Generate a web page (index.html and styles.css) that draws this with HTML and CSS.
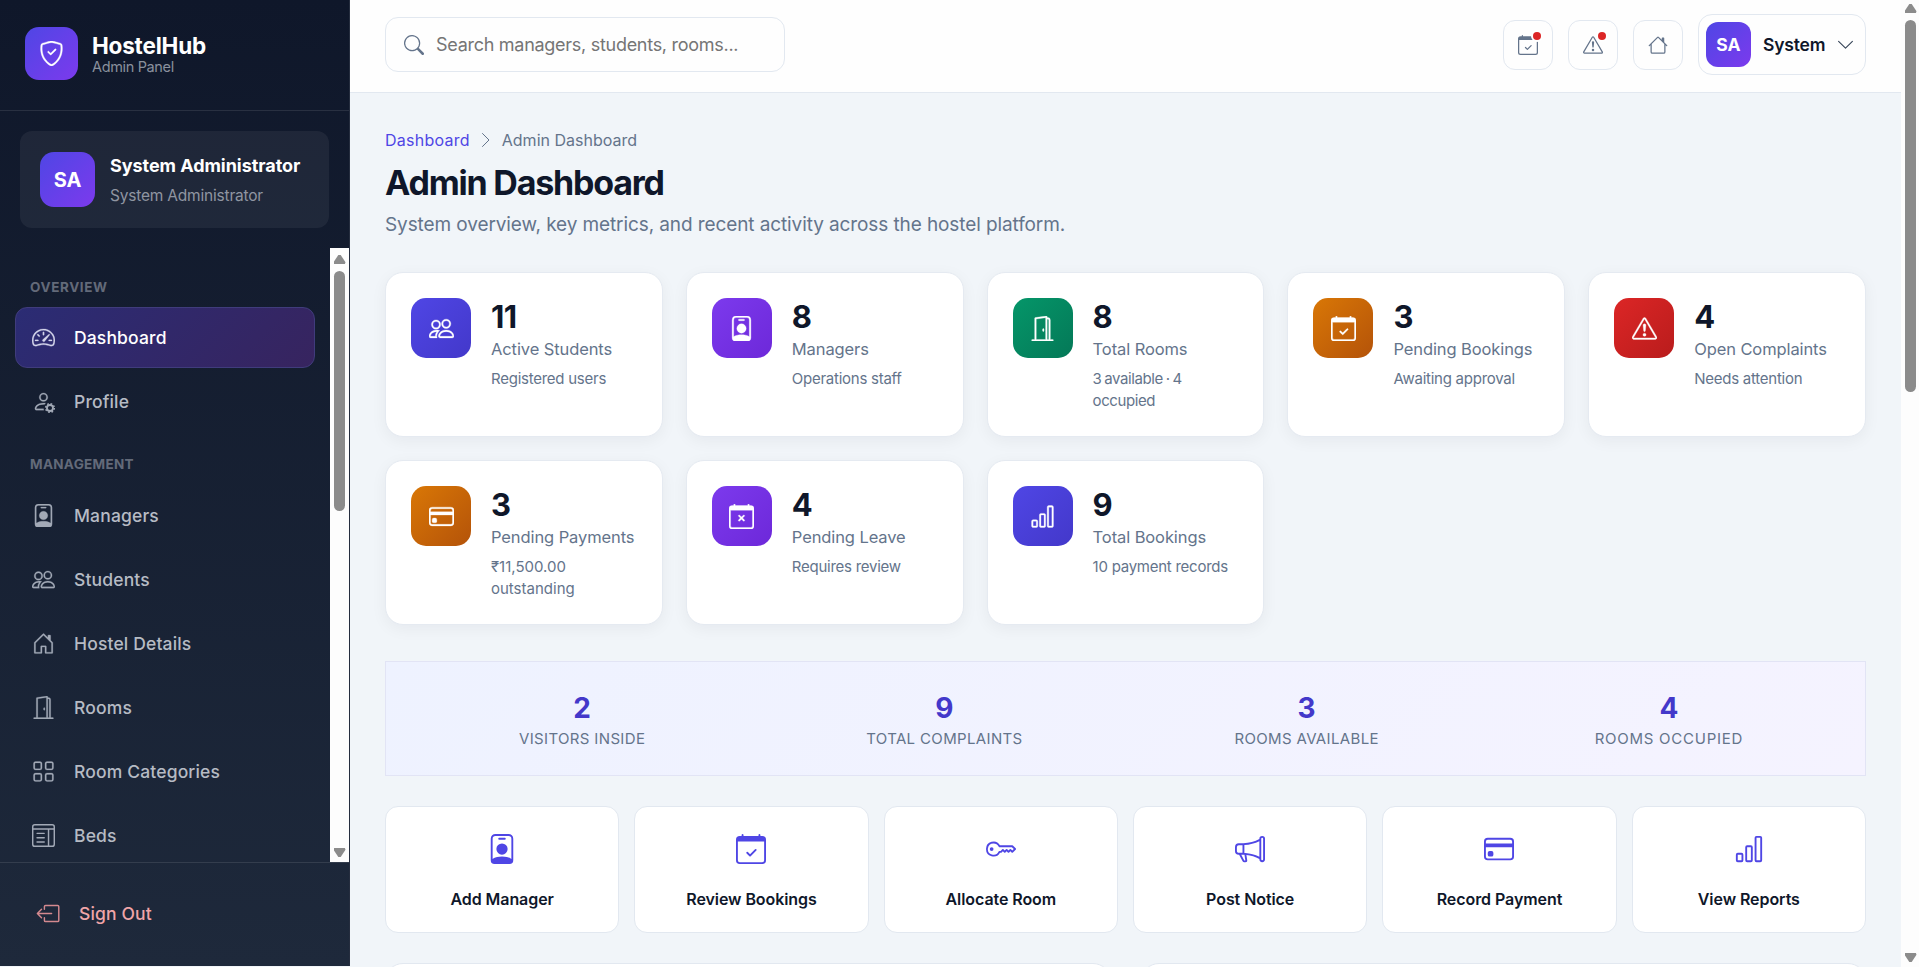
FILE: index.html
```html
<!DOCTYPE html>
<html lang="en">
<head>
<meta charset="utf-8">
<title>HostelHub Admin Dashboard</title>
<link rel="stylesheet" href="styles.css">
</head>
<body>
<svg class="sprite" xmlns="http://www.w3.org/2000/svg">
  <symbol id="i-shield" viewBox="0 0 16 16"><path d="M5.338 1.59a61 61 0 0 0-2.837.856.48.48 0 0 0-.328.39c-.554 4.157.726 7.19 2.253 9.188a10.7 10.7 0 0 0 2.287 2.233c.346.244.652.42.893.533q.18.085.293.118a1 1 0 0 0 .101.025 1 1 0 0 0 .1-.025q.114-.034.294-.118c.24-.113.547-.29.893-.533a10.7 10.7 0 0 0 2.287-2.233c1.527-1.997 2.807-5.031 2.253-9.188a.48.48 0 0 0-.328-.39c-.651-.213-1.75-.56-2.837-.855C9.552 1.29 8.531 1.067 8 1.067c-.53 0-1.552.223-2.662.524zM5.072.56C6.157.265 7.31 0 8 0s1.843.265 2.928.56c1.11.3 2.229.655 2.887.87a1.54 1.54 0 0 1 1.044 1.262c.596 4.477-.787 7.795-2.465 9.99a11.8 11.8 0 0 1-2.517 2.453 7 7 0 0 1-1.048.625c-.28.132-.581.24-.829.24s-.548-.108-.829-.24a7 7 0 0 1-1.048-.625 11.8 11.8 0 0 1-2.517-2.453C1.928 10.487.545 7.169 1.141 2.692A1.54 1.54 0 0 1 2.185 1.43 63 63 0 0 1 5.072.56"/><path d="M10.854 5.146a.5.5 0 0 1 0 .708l-3 3a.5.5 0 0 1-.708 0l-1.5-1.5a.5.5 0 1 1 .708-.708L7.5 7.793l2.646-2.647a.5.5 0 0 1 .708 0"/></symbol>
  <symbol id="i-speed" viewBox="0 0 16 16"><path d="M8 4a.5.5 0 0 1 .5.5V6a.5.5 0 0 1-1 0V4.500A.5.5 0 0 1 8 4M3.732 5.732a.5.5 0 0 1 .707 0l.915.914a.5.5 0 1 1-.708.708l-.914-.915a.5.5 0 0 1 0-.707M2 10a.5.5 0 0 1 .5-.5h1.586a.5.5 0 0 1 0 1H2.500A.5.5 0 0 1 2 10m9.500 0a.5.5 0 0 1 .5-.5h1.500a.5.5 0 0 1 0 1H12a.5.5 0 0 1-.5-.5m.754-4.246a.39.39 0 0 0-.527-.02L7.547 9.310a.91.91 0 1 0 1.302 1.258l3.434-4.297a.39.39 0 0 0-.029-.518z"/><path fill-rule="evenodd" d="M0 10a8 8 0 1 1 15.547 2.661c-.442 1.253-1.845 1.602-2.932 1.250C11.309 13.488 9.475 13 8 13c-1.474 0-3.310.488-4.615.911-1.087.352-2.490.003-2.932-1.250A8 8 0 0 1 0 10m8-7a7 7 0 0 0-6.603 9.329c.203.575.923.876 1.680.630C4.397 12.533 6.358 12 8 12s3.604.532 4.923.960c.757.245 1.477-.056 1.680-.631A7 7 0 0 0 8 3"/></symbol>
  <symbol id="i-persongear" viewBox="0 0 16 16"><path d="M11 5a3 3 0 1 1-6 0 3 3 0 0 1 6 0M8 7a2 2 0 1 0 0-4 2 2 0 0 0 0 4m.256 7a4.500 4.500 0 0 1-.229-1.004H3c.001-.246.154-.986.832-1.664C4.484 10.680 5.711 10 8 10q.390 0 .740.025c.226-.341.496-.650.804-.918Q8.844 9.002 8 9c-5 0-6 3-6 4s1 1 1 1z"/><g fill="none" stroke="currentColor"><circle cx="12.500" cy="12.500" r="2.100" stroke-width="1.300"/><circle cx="12.500" cy="12.500" r="3" stroke-width="1.100" stroke-dasharray="1.180 1.176"/></g></symbol>
  <symbol id="i-badge" viewBox="0 0 16 16"><path d="M6.500 2a.5.5 0 0 0 0 1h3a.5.5 0 0 0 0-1zM11 8a3 3 0 1 1-6 0 3 3 0 0 1 6 0"/><path d="M4.500 0A2.500 2.500 0 0 0 2 2.500V14a2 2 0 0 0 2 2h8a2 2 0 0 0 2-2V2.500A2.500 2.500 0 0 0 11.500 0zM3 2.500A1.500 1.500 0 0 1 4.500 1h7A1.500 1.500 0 0 1 13 2.500v10.795a4.200 4.200 0 0 0-.776-.492C11.392 12.387 10.063 12 8 12s-3.392.387-4.224.803a4.200 4.200 0 0 0-.776.492z"/></symbol>
  <symbol id="i-people" viewBox="0 0 16 16"><path d="M15 14s1 0 1-1-1-4-5-4-5 3-5 4 1 1 1 1zm-7.978-1L7 12.996c.001-.264.167-1.030.760-1.720C8.312 10.629 9.282 10 11 10c1.717 0 2.687.630 3.240 1.276.593.690.758 1.457.760 1.720l-.008.002-.014.002zM11 7a2 2 0 1 0 0-4 2 2 0 0 0 0 4m3-2a3 3 0 1 1-6 0 3 3 0 0 1 6 0M6.936 9.280a6 6 0 0 0-1.230-.247A7 7 0 0 0 5 9c-4 0-5 3-5 4q0 1 1 1h4.216A2.240 2.240 0 0 1 5 13c0-1.010.377-2.042 1.090-2.904.243-.294.526-.569.846-.816M4.920 10A5.500 5.500 0 0 0 4 13H1c0-.260.164-1.030.760-1.724.545-.636 1.492-1.256 3.160-1.275ZM1.500 5.500a3 3 0 1 1 6 0 3 3 0 0 1-6 0m3-2a2 2 0 1 0 0 4 2 2 0 0 0 0-4"/></symbol>
  <symbol id="i-housedoor" viewBox="0 0 16 16"><path d="M8.354 1.146a.5.5 0 0 0-.708 0l-6 6A.5.5 0 0 0 1.500 7.500v7a.5.5 0 0 0 .5.5h4.500a.5.5 0 0 0 .5-.5v-4h2v4a.5.5 0 0 0 .5.5H14a.5.5 0 0 0 .5-.5v-7a.5.5 0 0 0-.146-.354L13 5.793V2.500a.5.5 0 0 0-.5-.5h-1a.5.5 0 0 0-.5.500v1.293zM2.500 14V7.707l5.500-5.500 5.500 5.500V14H10v-4a.5.5 0 0 0-.5-.5h-3a.5.5 0 0 0-.5.5v4z"/></symbol>
  <symbol id="i-house" viewBox="0 0 16 16"><path d="M8.707 1.500a1 1 0 0 0-1.414 0L.646 8.146a.5.5 0 0 0 .708.708L2 8.207V13.500A1.500 1.500 0 0 0 3.500 15h9a1.500 1.500 0 0 0 1.500-1.500V8.207l.646.647a.5.5 0 0 0 .708-.708L13 5.793V2.500a.5.5 0 0 0-.5-.5h-1a.5.5 0 0 0-.5.500v1.293zM13 7.207V13.500a.5.5 0 0 1-.5.500h-9a.5.5 0 0 1-.5-.5V7.207l5-5z"/></symbol>
  <symbol id="i-door" viewBox="0 0 16 16"><path d="M8.500 10c-.276 0-.5-.448-.5-1s.224-1 .5-1 .5.448.5 1-.224 1-.5 1"/><path d="M10.828.122A.5.5 0 0 1 11 .5V1h.5A1.500 1.500 0 0 1 13 2.500V15h1.500a.5.5 0 0 1 0 1h-13a.5.5 0 0 1 0-1H3V1.500a.5.5 0 0 1 .430-.495l7-1a.5.5 0 0 1 .398.117M11.500 2H11v13h1V2.500a.5.5 0 0 0-.5-.5M4 1.934V15h6V1.077z"/></symbol>
  <symbol id="i-grid" viewBox="0 0 16 16"><path d="M1 2.500A1.500 1.500 0 0 1 2.500 1h3A1.500 1.500 0 0 1 7 2.500v3A1.500 1.500 0 0 1 5.500 7h-3A1.500 1.500 0 0 1 1 5.500zM2.500 2a.5.5 0 0 0-.5.500v3a.5.5 0 0 0 .5.500h3a.5.5 0 0 0 .5-.5v-3a.5.5 0 0 0-.5-.5zm6.500.500A1.500 1.500 0 0 1 10.500 1h3A1.500 1.500 0 0 1 15 2.500v3A1.500 1.500 0 0 1 13.500 7h-3A1.500 1.500 0 0 1 9 5.500zm1.500-.5a.5.5 0 0 0-.5.500v3a.5.5 0 0 0 .5.500h3a.5.5 0 0 0 .5-.5v-3a.5.5 0 0 0-.5-.5zM1 10.500A1.500 1.500 0 0 1 2.500 9h3A1.500 1.500 0 0 1 7 10.500v3A1.500 1.500 0 0 1 5.500 15h-3A1.500 1.500 0 0 1 1 13.500zm1.500-.5a.5.5 0 0 0-.5.500v3a.5.5 0 0 0 .5.500h3a.5.5 0 0 0 .5-.5v-3a.5.5 0 0 0-.5-.5zm6.500.500A1.500 1.500 0 0 1 10.500 9h3a1.500 1.500 0 0 1 1.500 1.500v3a1.500 1.500 0 0 1-1.500 1.500h-3A1.500 1.500 0 0 1 9 13.500zm1.500-.5a.5.5 0 0 0-.5.500v3a.5.5 0 0 0 .5.500h3a.5.5 0 0 0 .5-.5v-3a.5.5 0 0 0-.5-.5z"/></symbol>
  <symbol id="i-beds" viewBox="0 0 16 16"><g fill="none" stroke="currentColor" stroke-width="1"><rect x=".5" y=".5" width="15" height="15" rx="1.500"/><path d="M.5 3.500h15M11.500 3.500v12"/><path stroke-linecap="round" d="M3.500 6.500h5M3.500 9.500h5M3.500 12.500h5"/></g></symbol>
  <symbol id="i-out" viewBox="0 0 16 16"><path fill="none" stroke="currentColor" stroke-linecap="round" stroke-linejoin="round" d="M5.500 5V3.200a.8.8 0 0 1 .8-.8h8.400a.8.8 0 0 1 .8.800v9.600a.8.8 0 0 1-.8.800H6.300a.8.8 0 0 1-.8-.8V11M10.500 8H.8M3.500 5 .6 8l2.900 3"/></symbol>
  <symbol id="i-search" viewBox="0 0 16 16"><path d="M11.742 10.344a6.500 6.500 0 1 0-1.397 1.398h-.001q.044.060.098.115l3.850 3.850a1 1 0 0 0 1.415-1.414l-3.850-3.850a1 1 0 0 0-.115-.1zM12 6.500a5.500 5.500 0 1 1-11 0 5.500 5.500 0 0 1 11 0"/></symbol>
  <symbol id="i-calcheck" viewBox="0 0 16 16"><path d="M10.854 8.146a.5.5 0 0 1 0 .708l-3 3a.5.5 0 0 1-.708 0l-1.500-1.500a.5.5 0 0 1 .708-.708L7.500 10.793l2.646-2.647a.5.5 0 0 1 .708 0"/><use href="#cal-frame"/></symbol>
  <symbol id="i-calx" viewBox="0 0 16 16"><path d="M6.146 7.146a.5.5 0 0 1 .708 0L8 8.293l1.146-1.147a.5.5 0 1 1 .708.708L8.707 9l1.147 1.146a.5.5 0 0 1-.708.708L8 9.707l-1.146 1.147a.5.5 0 0 1-.708-.708L7.293 9 6.146 7.854a.5.5 0 0 1 0-.708"/><use href="#cal-frame"/></symbol>
  <path id="cal-frame" d="M3.500 0a.5.5 0 0 1 .5.5V1h8V.5a.5.5 0 0 1 1 0V1h1a2 2 0 0 1 2 2v11a2 2 0 0 1-2 2H2a2 2 0 0 1-2-2V3a2 2 0 0 1 2-2h1V.5a.5.5 0 0 1 .5-.5M1 4v10a1 1 0 0 0 1 1h12a1 1 0 0 0 1-1V4z"/>
  <symbol id="i-tri" viewBox="0 0 16 16"><path d="M7.938 2.016A.13.13 0 0 1 8.002 2a.13.13 0 0 1 .063.016.15.15 0 0 1 .054.057l6.857 11.667c.036.060.035.124.002.183a.2.2 0 0 1-.054.060.1.1 0 0 1-.066.017H1.146a.1.1 0 0 1-.066-.017.2.2 0 0 1-.054-.060.18.18 0 0 1 .002-.183L7.884 2.073a.15.15 0 0 1 .054-.057m1.044-.450a1.130 1.130 0 0 0-1.960 0L.165 13.233c-.457.778.091 1.767.980 1.767h13.713c.889 0 1.438-.990.980-1.767z"/><path d="M7.002 12a1 1 0 1 1 2 0 1 1 0 0 1-2 0M7.100 5.995a.905.905 0 1 1 1.800 0l-.350 3.507a.552.552 0 0 1-1.100 0z"/></symbol>
  <symbol id="i-card" viewBox="0 0 16 16"><path d="M0 4a2 2 0 0 1 2-2h12a2 2 0 0 1 2 2v8a2 2 0 0 1-2 2H2a2 2 0 0 1-2-2zm2-1a1 1 0 0 0-1 1v1h14V4a1 1 0 0 0-1-1zm13 4H1v5a1 1 0 0 0 1 1h12a1 1 0 0 0 1-1z"/><path d="M2 10a1 1 0 0 1 1-1h1a1 1 0 0 1 1 1v1a1 1 0 0 1-1 1H3a1 1 0 0 1-1-1z"/></symbol>
  <symbol id="i-bars" viewBox="0 0 16 16"><path d="M4 11H2v3h2zm5-4H7v7h2zm5-5v12h-2V2zm-2-1a1 1 0 0 0-1 1v12a1 1 0 0 0 1 1h2a1 1 0 0 0 1-1V2a1 1 0 0 0-1-1zM6 7a1 1 0 0 1 1-1h2a1 1 0 0 1 1 1v7a1 1 0 0 1-1 1H7a1 1 0 0 1-1-1zm-5 4a1 1 0 0 1 1-1h2a1 1 0 0 1 1 1v3a1 1 0 0 1-1 1H2a1 1 0 0 1-1-1z"/></symbol>
  <symbol id="i-key" viewBox="0 0 16 16"><path d="M0 8a4 4 0 0 1 7.465-2H14a.5.5 0 0 1 .354.146l1.500 1.500a.5.5 0 0 1 0 .708l-1.500 1.500a.5.5 0 0 1-.708 0L13 9.207l-.646.647a.5.5 0 0 1-.708 0L11 9.207l-.646.647a.5.5 0 0 1-.708 0L9 9.207l-.646.647A.5.5 0 0 1 8 10h-.535A4 4 0 0 1 0 8m4-3a3 3 0 1 0 2.712 4.285A.5.5 0 0 1 7.163 9h.630l.853-.854a.5.5 0 0 1 .708 0l.646.647.646-.647a.5.5 0 0 1 .708 0l.646.647.646-.647a.5.5 0 0 1 .708 0l.646.647.793-.793-1-1h-6.630a.5.5 0 0 1-.451-.285A3 3 0 0 0 4 5"/><path d="M4 8a1 1 0 1 1-2 0 1 1 0 0 1 2 0"/></symbol>
  <symbol id="i-mega" viewBox="0 0 16 16"><path d="M13 2.500a1.500 1.500 0 0 1 3 0v11a1.500 1.500 0 0 1-3 0v-.214c-2.162-1.241-4.490-1.843-6.912-2.083l.405 2.712A1 1 0 0 1 5.510 15.100h-.548a1 1 0 0 1-.916-.599l-1.850-3.490-.202-.003A2.014 2.014 0 0 1 0 9V7a2.020 2.020 0 0 1 1.992-2.013 75 75 0 0 0 2.483-.075c3.043-.154 6.148-.849 8.525-2.199zm1 0v11a.5.5 0 0 0 1 0v-11a.5.5 0 0 0-1 0m-1 1.350c-2.344 1.205-5.209 1.842-8 2.033v4.233q.270.015.537.036c2.568.189 5.093.744 7.463 1.993zm-9 6.215v-4.130a95 95 0 0 1-1.992.052A1.020 1.020 0 0 0 1 7v2c0 .550.448 1.002 1.006 1.009A61 61 0 0 1 4 10.065m-.657.975 1.609 3.037.010.024h.548l-.002-.014-.443-2.966a68 68 0 0 0-1.722-.082z"/></symbol>
  <symbol id="i-right" viewBox="0 0 16 16"><path fill="none" stroke="currentColor" stroke-linecap="round" stroke-linejoin="round" d="m4.500 1.500 6.500 6.500-6.500 6.500"/></symbol>
  <symbol id="i-down" viewBox="0 0 16 16"><path fill="none" stroke="currentColor" stroke-linecap="round" stroke-linejoin="round" d="m1.500 5 6.500 6.500L14.500 5"/></symbol>
</svg>

<div class="app">
  <aside class="sidebar">
    <div class="brand">
      <span class="brand-logo"><svg class="icon"><use href="#i-shield"/></svg></span>
      <div>
        <div class="brand-name">HostelHub</div>
        <div class="brand-sub">Admin Panel</div>
      </div>
    </div>
    <div class="user-card">
      <span class="avatar">SA</span>
      <div>
        <div class="user-name">System Administrator</div>
        <div class="user-role">System Administrator</div>
      </div>
    </div>
    <div class="nav-wrap">
      <nav class="nav">
        <div class="nav-title">OVERVIEW</div>
        <a class="nav-item active"><svg class="icon"><use href="#i-speed"/></svg><span>Dashboard</span></a>
        <a class="nav-item"><svg class="icon"><use href="#i-persongear"/></svg><span>Profile</span></a>
        <div class="nav-title second">MANAGEMENT</div>
        <a class="nav-item"><svg class="icon"><use href="#i-badge"/></svg><span>Managers</span></a>
        <a class="nav-item"><svg class="icon"><use href="#i-people"/></svg><span>Students</span></a>
        <a class="nav-item"><svg class="icon"><use href="#i-housedoor"/></svg><span>Hostel Details</span></a>
        <a class="nav-item"><svg class="icon"><use href="#i-door"/></svg><span>Rooms</span></a>
        <a class="nav-item"><svg class="icon"><use href="#i-grid"/></svg><span>Room Categories</span></a>
        <a class="nav-item"><svg class="icon"><use href="#i-beds"/></svg><span>Beds</span></a>
      </nav>
      <div class="scrollbar"><i class="arrow up"></i><i class="thumb"></i><i class="arrow down"></i></div>
    </div>
    <div class="side-foot"><svg class="icon"><use href="#i-out"/></svg><span>Sign Out</span></div>
  </aside>

  <div class="main">
    <header class="topbar">
      <div class="search"><svg class="icon"><use href="#i-search"/></svg><span>Search managers, students, rooms...</span></div>
      <div class="actions">
        <span class="icon-btn"><svg class="icon"><use href="#i-calcheck"/></svg><i class="dot"></i></span>
        <span class="icon-btn"><svg class="icon"><use href="#i-tri"/></svg><i class="dot"></i></span>
        <span class="icon-btn"><svg class="icon"><use href="#i-house"/></svg></span>
        <span class="profile"><span class="avatar small">SA</span><span class="profile-name">System</span><svg class="icon"><use href="#i-down"/></svg></span>
      </div>
    </header>

    <main class="content">
      <div class="crumbs"><a>Dashboard</a><svg class="icon"><use href="#i-right"/></svg><span>Admin Dashboard</span></div>
      <h1>Admin Dashboard</h1>
      <p class="lead">System overview, key metrics, and recent activity across the hostel platform.</p>

      <section class="stats">
        <div class="stat"><span class="tile indigo"><svg class="icon"><use href="#i-people"/></svg></span><div><div class="num">11</div><div class="label">Active Students</div><div class="note">Registered users</div></div></div>
        <div class="stat"><span class="tile violet"><svg class="icon"><use href="#i-badge"/></svg></span><div><div class="num">8</div><div class="label">Managers</div><div class="note">Operations staff</div></div></div>
        <div class="stat"><span class="tile green"><svg class="icon"><use href="#i-door"/></svg></span><div><div class="num">8</div><div class="label">Total Rooms</div><div class="note split">3 available · 4<br>occupied</div></div></div>
        <div class="stat"><span class="tile amber"><svg class="icon"><use href="#i-calcheck"/></svg></span><div><div class="num">3</div><div class="label">Pending Bookings</div><div class="note">Awaiting approval</div></div></div>
        <div class="stat"><span class="tile red"><svg class="icon"><use href="#i-tri"/></svg></span><div><div class="num">4</div><div class="label">Open Complaints</div><div class="note">Needs attention</div></div></div>
        <div class="stat"><span class="tile amber"><svg class="icon"><use href="#i-card"/></svg></span><div><div class="num">3</div><div class="label">Pending Payments</div><div class="note money">₹11,500.00<br>outstanding</div></div></div>
        <div class="stat"><span class="tile violet"><svg class="icon"><use href="#i-calx"/></svg></span><div><div class="num">4</div><div class="label">Pending Leave</div><div class="note">Requires review</div></div></div>
        <div class="stat"><span class="tile indigo"><svg class="icon"><use href="#i-bars"/></svg></span><div><div class="num">9</div><div class="label">Total Bookings</div><div class="note">10 payment records</div></div></div>
      </section>

      <section class="strip">
        <div><div class="strip-num">2</div><div class="strip-label">VISITORS INSIDE</div></div>
        <div><div class="strip-num">9</div><div class="strip-label">TOTAL COMPLAINTS</div></div>
        <div><div class="strip-num">3</div><div class="strip-label">ROOMS AVAILABLE</div></div>
        <div><div class="strip-num">4</div><div class="strip-label wide">ROOMS OCCUPIED</div></div>
      </section>

      <section class="quick">
        <a class="quick-card"><svg class="icon"><use href="#i-badge"/></svg><span>Add Manager</span></a>
        <a class="quick-card"><svg class="icon"><use href="#i-calcheck"/></svg><span>Review Bookings</span></a>
        <a class="quick-card"><svg class="icon"><use href="#i-key"/></svg><span>Allocate Room</span></a>
        <a class="quick-card"><svg class="icon"><use href="#i-mega"/></svg><span>Post Notice</span></a>
        <a class="quick-card"><svg class="icon"><use href="#i-card"/></svg><span>Record Payment</span></a>
        <a class="quick-card"><svg class="icon"><use href="#i-bars"/></svg><span>View Reports</span></a>
      </section>

      <section class="panels"><div class="panel"></div><div class="panel"></div></section>
    </main>
  </div>
  <div class="scrollbar page"><i class="arrow up"></i><i class="thumb"></i><i class="arrow down"></i></div>
</div>
</body>
</html>
```
FILE: styles.css
```css
* { box-sizing: border-box; }
body {
  margin: 0;
  height: 967px;
  overflow: hidden;
  background: #f1f5f9;
  color: #0f172a;
  font-family: Inter, "Noto Sans", sans-serif;
}
.sprite { position: absolute; width: 0; height: 0; }
.icon { width: 20px; height: 20px; fill: currentColor; flex: none; display: block; }
.app { display: flex; height: 967px; }

/* Sidebar */
.sidebar {
  width: 350px;
  height: 966px;
  flex: none;
  display: flex;
  flex-direction: column;
  background: linear-gradient(180deg, #0f172a 0%, #1e293b 100%);
  border-right: 1px solid #252d3e;
  color: #fff;
}
.brand {
  height: 111px;
  padding: 0 25px 4px;
  display: flex;
  align-items: center;
  gap: 14px;
  border-bottom: 1px solid rgba(255, 255, 255, .1);
}
.brand-logo {
  width: 53px;
  height: 53px;
  border-radius: 14px;
  display: grid;
  place-items: center;
  background: linear-gradient(135deg, #4f46e5, #7c3aed);
}
.brand-logo .icon { width: 25px; height: 25px; stroke: currentColor; stroke-width: .2px; }
.brand-name { margin-top: 2px; font-size: 22.500px; font-weight: 700; line-height: 25px; letter-spacing: -.2px; }
.brand-sub { font-size: 14.500px; line-height: 18px; color: #8a909d; letter-spacing: -.35px; }
.user-card {
  margin: 20px;
  height: 97px;
  padding: 0 20px;
  flex: none;
  display: flex;
  align-items: center;
  gap: 15px;
  border-radius: 12px;
  background: rgba(255, 255, 255, .06);
}
.avatar {
  width: 55px;
  height: 55px;
  flex: none;
  display: grid;
  place-items: center;
  border-radius: 14px;
  font-size: 20px;
  font-weight: 700;
  color: #fff;
  background: linear-gradient(135deg, #4f46e5, #7c3aed);
}
.user-name { font-size: 18px; font-weight: 700; line-height: 28px; white-space: nowrap; letter-spacing: -.05px; }
.user-role { font-size: 15.500px; line-height: 24px; margin-top: 4px; color: #8f95a1; white-space: nowrap; letter-spacing: -.2px; }
.nav-wrap { flex: 1; min-height: 0; display: flex; }
.nav { flex: 1; padding: 20px 15px 0; overflow: hidden; }
.nav-title {
  height: 39px;
  padding: 9px 15px 0;
  font-size: 13.500px;
  line-height: 21px;
  font-weight: 700;
  letter-spacing: .6px;
  color: #636a79;
}
.nav-title.second { height: 50px; padding-top: 19px; letter-spacing: .3px; }
.nav-item {
  height: 61px;
  margin-bottom: 3px;
  padding: 0 16px;
  display: flex;
  align-items: center;
  gap: 19px;
  border: 1px solid transparent;
  border-radius: 12px;
  font-size: 17.500px;
  font-weight: 500;
  letter-spacing: .15px;
  color: #b6bbc4;
}
.nav-item .icon { width: 23px; height: 23px; color: #a2a9b6; stroke: currentColor; stroke-width: .15px; }
.nav-item.active {
  color: #fff;
  background: linear-gradient(135deg, #2b2c74, #37245f);
  border-color: #403c7c;
}
.nav-item.active .icon { color: #d3d4ea; }
.side-foot {
  height: 104px;
  flex: none;
  padding: 0 36px 2px;
  display: flex;
  align-items: center;
  gap: 19px;
  border-top: 1px solid rgba(255, 255, 255, .1);
  font-size: 17.500px;
  font-weight: 500;
  letter-spacing: .15px;
  color: #f0a5a8;
}
.side-foot .icon { width: 24px; height: 23px; color: #d4898f; }

/* Scrollbars */
.scrollbar {
  width: 19px;
  flex: none;
  display: flex;
  flex-direction: column;
  align-items: center;
  background: #fdfdfd;
}
.thumb { width: 11px; height: 240px; margin-top: 7px; border-radius: 6px; background: #8b8b8b; }
.arrow { width: 12px; height: 9px; background: #8b8b8b; }
.arrow.up { margin-top: 7px; clip-path: polygon(40% 0, 60% 0, 100% 80%, 95% 100%, 5% 100%, 0 80%); }
.arrow.down { margin-top: auto; margin-bottom: 5px; clip-path: polygon(5% 0, 95% 0, 100% 20%, 60% 100%, 40% 100%, 0 20%); }
.page { width: 18px; padding-left: 1px; }
.page .arrow.up { margin-top: 4px; }
.page .thumb { height: 372px; }

/* Topbar */
.main { flex: 1; min-width: 0; height: 967px; overflow: hidden; }
.topbar {
  height: 93px;
  padding: 0 35px 3px;
  display: flex;
  justify-content: space-between;
  align-items: center;
  background: #fefefe;
  border-bottom: 1px solid #e2e8f0;
}
.search {
  width: 400px;
  height: 55px;
  padding: 0 18px;
  display: flex;
  align-items: center;
  gap: 12px;
  border: 1px solid #e2e8f0;
  border-radius: 13px;
  font-size: 18px;
  letter-spacing: -.28px;
  color: #757575;
  white-space: nowrap;
}
.search .icon { color: #64748b; }
.actions { display: flex; align-items: center; gap: 15px; }
.icon-btn {
  position: relative;
  width: 50px;
  height: 50px;
  display: grid;
  place-items: center;
  border: 1px solid #e2e8f0;
  border-radius: 12px;
  color: #64748b;
}
.dot {
  position: absolute;
  top: 11px;
  right: 11px;
  width: 8px;
  height: 8px;
  border-radius: 50%;
  background: #dc2626;
  box-shadow: 0 0 0 2px #fff;
}
.profile {
  width: 168px;
  height: 61px;
  padding: 0 11px 0 7px;
  display: flex;
  align-items: center;
  border: 1px solid #e2e8f0;
  border-radius: 14px;
}
.avatar.small { width: 45px; height: 45px; border-radius: 12px; font-size: 17.500px; }
.profile-name { margin-left: 12px; font-size: 17.500px; font-weight: 600; letter-spacing: -.2px; }
.profile .icon { width: 17px; height: 17px; margin-left: auto; color: #334155; }

/* Content */
.content { padding: 33px 35px 0; }
.crumbs { display: flex; align-items: center; height: 28px; font-size: 16px; color: #64748b; }
.crumbs a { color: #4f46e5; letter-spacing: .25px; }
.crumbs .icon { width: 16px; height: 16px; margin: 0 8px; }
h1 { margin: 7px 0 0; font-size: 34px; font-weight: 700; line-height: 44px; letter-spacing: -1.200px; }
.lead { margin: 5px 0 0; font-size: 19px; line-height: 30px; letter-spacing: -.1px; color: #64748b; }
.stats {
  margin-top: 32px;
  display: grid;
  grid-template-columns: repeat(5, 1fr);
  grid-auto-rows: 165px;
  gap: 23px;
}
.stat {
  display: flex;
  align-items: flex-start;
  gap: 20px;
  padding: 25px;
  background: #fff;
  border: 1px solid #e5eaf1;
  border-radius: 18px;
  box-shadow: 0 4px 16px rgba(15, 23, 42, .05);
  white-space: nowrap;
}
.tile {
  width: 60px;
  height: 60px;
  flex: none;
  display: grid;
  place-items: center;
  border-radius: 15px;
  color: #fff;
}
.tile .icon { width: 25px; height: 25px; stroke: currentColor; stroke-width: .2px; }
.indigo { background: linear-gradient(135deg, #4f46e5, #4338ca); }
.violet { background: linear-gradient(135deg, #7c3aed, #6d28d9); }
.green { background: linear-gradient(135deg, #059669, #047857); }
.amber { background: linear-gradient(135deg, #d97706, #b45309); }
.red { background: linear-gradient(135deg, #dc2626, #b91c1c); }
.num { font-size: 31px; font-weight: 700; line-height: 38px; letter-spacing: -.6px; }
.label { font-size: 16.500px; line-height: 26px; color: #64748b; letter-spacing: -.1px; }
.note { font-size: 15px; line-height: 22px; margin-top: 6px; color: #64748b; letter-spacing: -.25px; }
.note.split { letter-spacing: -.4px; word-spacing: -1px; }
.note.money { letter-spacing: 0; }
.strip {
  margin-top: 36px;
  height: 115px;
  padding: 4px 15px 0;
  display: grid;
  grid-template-columns: repeat(4, 1fr);
  align-items: center;
  text-align: center;
  background: linear-gradient(135deg, #eef2ff, #f5f3ff);
  border: 1px solid #e2e4f5;
}
.strip-num { font-size: 28px; font-weight: 700; line-height: 35px; color: #4338ca; }
.strip-label { font-size: 15px; line-height: 25px; color: #64748b; letter-spacing: .35px; }
.strip-label.wide { letter-spacing: .750px; }
.quick { margin-top: 30px; display: grid; grid-template-columns: repeat(6, 1fr); gap: 15px; }
.quick-card {
  height: 127px;
  padding-top: 27px;
  display: flex;
  flex-direction: column;
  align-items: center;
  background: #fff;
  border: 1px solid #e2e8f0;
  border-radius: 13px;
  font-size: 16px;
  font-weight: 600;
  line-height: 24px;
  letter-spacing: -.07px;
}
.quick-card .icon { width: 30px; height: 30px; margin-bottom: 23px; color: #4f46e5; }
.panels { margin-top: 30px; display: grid; grid-template-columns: 1fr 1fr; gap: 30px; }
.panel { height: 200px; background: #fff; border: 1px solid #e2e8f0; border-radius: 18px; }
```
